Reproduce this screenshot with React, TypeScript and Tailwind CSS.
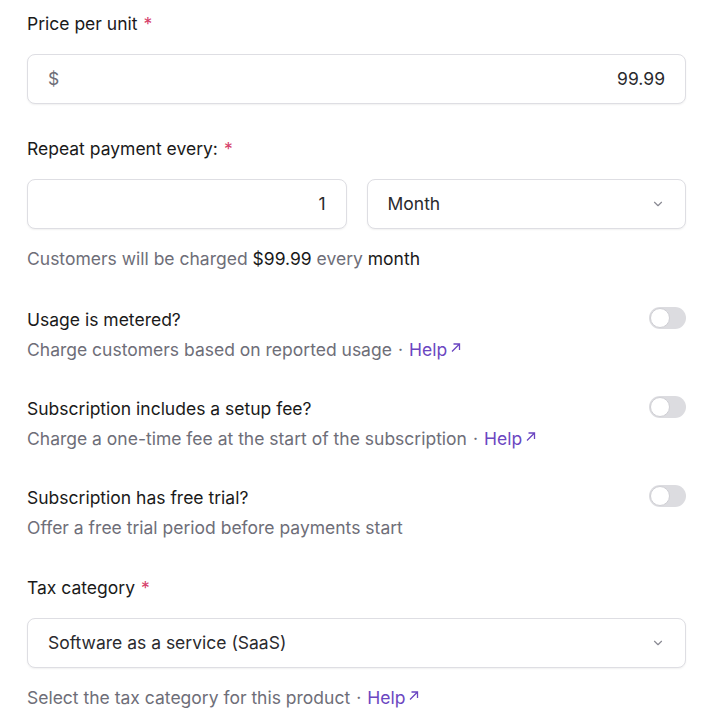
import { ChevronDown } from 'lucide-react';
import { ReactNode } from 'react';

function Label({ children, className }: { children: ReactNode; className?: string }) {
	return (
		<div className={'leading-6 text-[#1a1a1a] ' + (className ?? '')}>
			{children}
			<span className="ml-1.5 text-[#d6416b]">*</span>
		</div>
	);
}

function Help() {
	return (
		<a href="#" className="inline-flex items-center text-[#6b46c1]">
			Help
			<svg width="11" height="11" viewBox="0 0 11 11" className="ml-[3px] -mt-1.5" fill="none" stroke="currentColor" strokeWidth="1.3">
				<path d="M2 9.5 L9.5 2 M3.5 2 H9.5 V8" />
			</svg>
		</a>
	);
}

function Box({ className, children }: { className?: string; children: ReactNode }) {
	return (
		<div
			className={
				'flex h-[50px] items-center rounded-lg border border-[#dedee3] bg-white px-5 text-[#2a2a2e] shadow-[0_1px_2px_rgba(0,0,0,0.06)] ' +
				(className ?? '')
			}
		>
			{children}
		</div>
	);
}

function Toggle() {
	return (
		<div className="flex h-[22px] w-[37px] shrink-0 items-center rounded-full bg-[#dcdce0] p-[1px]">
			<div className="h-5 w-5 rounded-full border border-[#cfcfd4] bg-white" />
		</div>
	);
}

function ToggleRow({ title, desc, help }: { title: string; desc: string; help?: boolean }) {
	return (
		<div className="flex items-start justify-between">
			<div>
				<div className="leading-6 text-[#1a1a1a]">{title}</div>
				<div className="mt-1.5 leading-6 text-[#6e6e78]">
					{desc}
					{help && (
						<>
							<span className="mx-1.5">·</span>
							<Help />
						</>
					)}
				</div>
			</div>
			<div className="-mt-[1px]">
				<Toggle />
			</div>
		</div>
	);
}

export default function App() {
	return (
		<div
			className="bg-white pl-[27px] pr-[35px] pt-3 text-[17.5px]"
			style={{ fontFamily: 'Inter, "Noto Sans", sans-serif' }}
		>
			<Label>Price per unit</Label>
			<Box className="mt-[18px] justify-between">
				<span className="text-[#6e6e78]">$</span>
				<span>99.99</span>
			</Box>

			<Label className="mt-[33px]">Repeat payment every:</Label>
			<div className="mt-[18px] flex gap-5">
				<Box className="flex-1 justify-end">1</Box>
				<Box className="flex-1 justify-between">
					<span>Month</span>
					<ChevronDown size={14} className="text-[#8a8a93]" />
				</Box>
			</div>
			<div className="mt-[18px] leading-6 text-[#6e6e78]">
				Customers will be charged <span className="text-[#1a1a1a]">$99.99</span> every{' '}
				<span className="text-[#1a1a1a]">month</span>
			</div>

			<div className="mt-[37px] flex flex-col gap-[35px]">
				<ToggleRow title="Usage is metered?" desc="Charge customers based on reported usage" help />
				<ToggleRow
					title="Subscription includes a setup fee?"
					desc="Charge a one-time fee at the start of the subscription"
					help
				/>
				<ToggleRow title="Subscription has free trial?" desc="Offer a free trial period before payments start" />
			</div>

			<Label className="mt-[36px]">Tax category</Label>
			<Box className="mt-[18px] justify-between">
				<span>Software as a service (SaaS)</span>
				<ChevronDown size={14} className="text-[#8a8a93]" />
			</Box>
			<div className="mt-[18px] leading-6 text-[#6e6e78]">
				Select the tax category for this product
				<span className="mx-1.5">·</span>
				<Help />
			</div>
		</div>
	);
}
